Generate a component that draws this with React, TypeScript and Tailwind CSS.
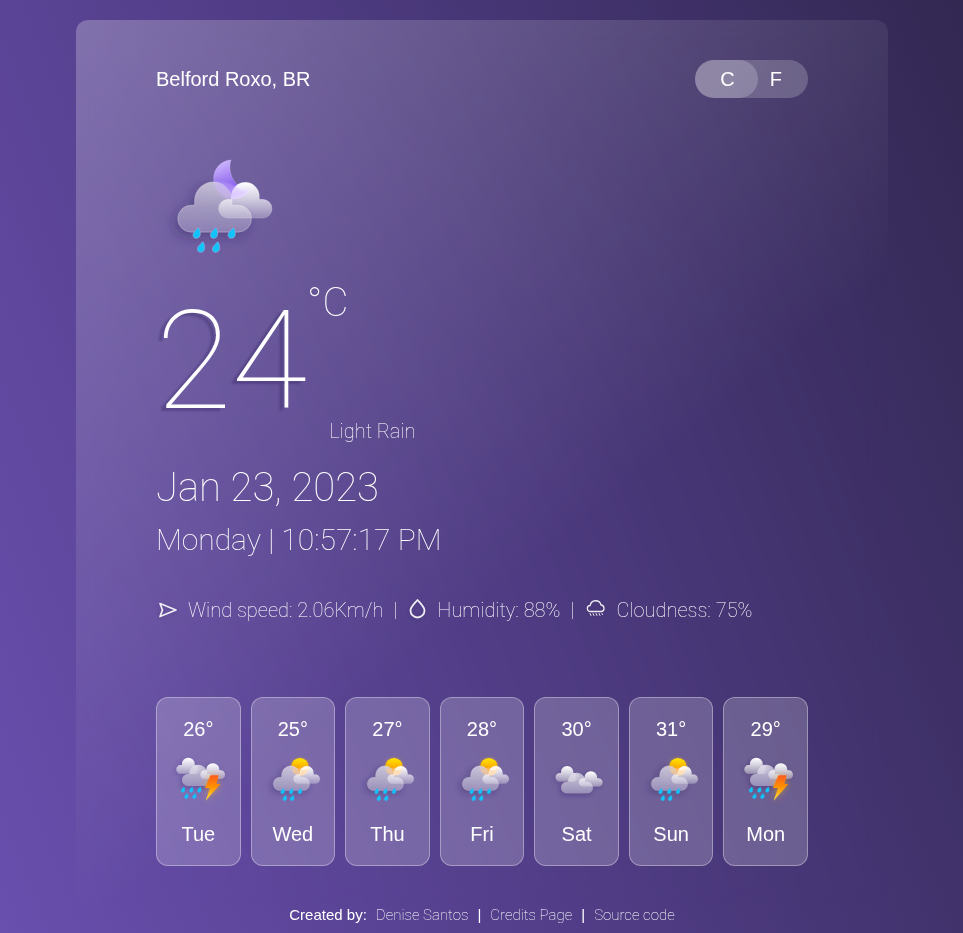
import { useState, type ReactNode } from "react";

type Kind = "storm" | "sunRain" | "cloudy";

const forecast: { temp: number; day: string; kind: Kind }[] = [
  { temp: 26, day: "Tue", kind: "storm" },
  { temp: 25, day: "Wed", kind: "sunRain" },
  { temp: 27, day: "Thu", kind: "sunRain" },
  { temp: 28, day: "Fri", kind: "sunRain" },
  { temp: 30, day: "Sat", kind: "cloudy" },
  { temp: 31, day: "Sun", kind: "sunRain" },
  { temp: 29, day: "Mon", kind: "storm" },
];

/* Gradients and filters shared by every weather drawing. */
function SharedDefs() {
  return (
    <svg width="0" height="0" className="absolute" aria-hidden="true">
      <defs>
        <linearGradient id="cloudBody" x1="0.2" y1="0" x2="0.1" y2="1">
          <stop offset="0" stopColor="#aaa0c4" stopOpacity="0.85" />
          <stop offset="0.5" stopColor="#8a7eb0" stopOpacity="0.85" />
          <stop offset="1" stopColor="#8a7cb6" stopOpacity="0.7" />
        </linearGradient>
        <linearGradient id="cloudBodyDay" x1="0" y1="0" x2="0" y2="1">
          <stop offset="0" stopColor="#b9b1cd" stopOpacity="0.8" />
          <stop offset="0.6" stopColor="#a39abf" stopOpacity="0.8" />
          <stop offset="1" stopColor="#9a8fbd" stopOpacity="0.75" />
        </linearGradient>
        <linearGradient id="backCloud" x1="0" y1="0" x2="0" y2="1">
          <stop offset="0" stopColor="#fff" stopOpacity="0.36" />
          <stop offset="1" stopColor="#fff" stopOpacity="0.1" />
        </linearGradient>
        <linearGradient id="frontCloud" x1="0" y1="0" x2="0" y2="1">
          <stop offset="0" stopColor="#fff" />
          <stop offset="0.45" stopColor="#fff" stopOpacity="0.7" />
          <stop offset="1" stopColor="#fff" stopOpacity="0.28" />
        </linearGradient>
        <linearGradient id="moon" x1="0" y1="0" x2="0.4" y2="1">
          <stop offset="0" stopColor="#d8c4ff" />
          <stop offset="0.75" stopColor="#8d63ef" />
          <stop offset="1" stopColor="#b795ff" />
        </linearGradient>
        <linearGradient id="sun" x1="0" y1="0" x2="0" y2="1">
          <stop offset="0" stopColor="#ffe600" />
          <stop offset="0.6" stopColor="#ffa800" />
          <stop offset="1" stopColor="#ff9500" />
        </linearGradient>
        <linearGradient id="bolt" x1="0" y1="0" x2="0" y2="1">
          <stop offset="0" stopColor="#ff5a1f" />
          <stop offset="0.45" stopColor="#ff9100" />
          <stop offset="1" stopColor="#ffe23d" />
        </linearGradient>
        <filter id="shade" x="-30%" y="-30%" width="160%" height="170%">
          <feDropShadow dx="-12" dy="14" stdDeviation="18" floodColor="#2c1d5c" floodOpacity="0.5" />
        </filter>
        <filter id="shadeSmall" x="-30%" y="-30%" width="160%" height="170%">
          <feDropShadow dx="-4" dy="6" stdDeviation="8" floodColor="#2c1d5c" floodOpacity="0.4" />
        </filter>
        <filter id="glow" x="-60%" y="-60%" width="220%" height="220%">
          <feDropShadow dx="0" dy="0" stdDeviation="10" floodColor="#ffb300" floodOpacity="0.5" />
        </filter>
        <filter id="soft" x="-20%" y="-20%" width="140%" height="140%">
          <feGaussianBlur stdDeviation="3" />
        </filter>
      </defs>
    </svg>
  );
}

const BIG_CLOUD =
  "M124 276a40 40 0 0 1-1-80h11v-14a56 56 0 0 1 112 0v14h18a40 40 0 0 1 1 80z";
const SMALL_CLOUD =
  "M234 234a28 28 0 0 1 0-56h10v-9a42 42 0 0 1 84 0v9h10a28 28 0 0 1 0 56z";
const MOON = "M243 60c-30 2-52 26-52 56 0 34 26 60 58 60 22 0 40-10 49-26-44-2-68-54-55-90z";
const PUFF = "M116 288a18 18 0 0 1 0-36h4v-6a27 27 0 0 1 53 0v6h6a18 18 0 0 1 0 36z";

const DROPS: [number, number][] = [
  [140, 279],
  [192, 279],
  [245, 279],
  [153, 321],
  [198, 321],
];

function Drop({ x, y, scale = 1, edge }: { x: number; y: number; scale?: number; edge?: boolean }) {
  return (
    <path
      d="M6-16C1-12-11-2-11 6-11 12-7 16-1 16c7 0 12-6 12-13C11-4 9-12 6-16z"
      transform={`translate(${x} ${y}) scale(${scale})`}
      fill="#10c4fb"
      stroke={edge ? "#9ba6dc" : "#1fbdf5"}
      strokeWidth={edge ? "2" : "3"}
    />
  );
}

function RainCloud({ night }: { night?: boolean }) {
  return (
    <>
      {night ? (
        <path d={MOON} fill="url(#moon)" stroke="#d9c8ff" strokeOpacity="0.5" strokeWidth="2" />
      ) : (
        <circle cx="245" cy="132" r="53" fill="url(#sun)" filter="url(#glow)" />
      )}
      <g filter="url(#shade)">
        <path d={BIG_CLOUD} fill={night ? "url(#cloudBody)" : "url(#cloudBodyDay)"} />
        <path d={BIG_CLOUD} fill="url(#backCloud)" stroke="#fff" strokeOpacity="0.22" strokeWidth="3" />
      </g>
      {!night && (
        <path d="M195 150a54 54 0 0 0 100 0l-50-14z" fill="#ffc98a" opacity="0.55" filter="url(#soft)" />
      )}
      <path d={SMALL_CLOUD} fill="url(#frontCloud)" stroke="#fff" strokeOpacity="0.3" strokeWidth="2" />
      {night ? (
        <path
          d="M194 130c4 24 24 46 54 46 24 0 42-12 50-28-14 4-30 2-44-10-20-12-44-14-60-8z"
          fill="#cdb2ff"
          opacity="0.45"
          filter="url(#soft)"
        />
      ) : (
        <path d="M250 150c14 6 30 4 46-8-4 20-20 36-46 40z" fill="#ffcf9a" opacity="0.5" filter="url(#soft)" />
      )}
      {DROPS.map(([x, y]) => (
        <Drop key={`${x}-${y}`} x={x} y={y} edge={night} />
      ))}
    </>
  );
}

/* The three overlapping puffs of a cloudy sky. */
function Puffs() {
  return (
    <g filter="url(#shadeSmall)">
      <path
        d="M94 251a13 13 0 0 1 0-26h4v-3a19 19 0 0 1 38 0v3h6a13 13 0 0 1 0 26z"
        fill="url(#frontCloud)"
      />
      <path d={PUFF} fill="url(#cloudBodyDay)" />
      <path d={PUFF} fill="url(#backCloud)" />
      <path d="M121 252a24 24 0 0 1 20-28 24 24 0 0 1-2 28z" fill="#fff" opacity="0.25" />
      <path
        d="M166 267a13 13 0 0 1 0-26h5v-2a19 19 0 0 1 39 0v2h4a13 13 0 0 1 0 26z"
        fill="url(#frontCloud)"
      />
    </g>
  );
}

const STORM_DROPS: [number, number][] = [
  [101, 299],
  [126, 299],
  [150, 299],
  [111, 318],
  [135, 318],
];

function ForecastIcon({ kind }: { kind: Kind }) {
  if (kind === "sunRain") {
    return (
      <svg viewBox="-9 -6 424 424" className="size-[70px]" aria-hidden="true">
        <RainCloud />
      </svg>
    );
  }
  if (kind === "cloudy") {
    return (
      <svg viewBox="39 135 217 217" className="size-[70px]" aria-hidden="true">
        <Puffs />
      </svg>
    );
  }
  return (
    <svg viewBox="41 162 210 210" className="size-[70px]" aria-hidden="true">
      <Puffs />
      {STORM_DROPS.map(([x, y]) => (
        <Drop key={`${x}-${y}`} x={x} y={y} scale={0.48} />
      ))}
      <path d="M183 256h25l-7 26h12l-44 50 13-38h-15z" fill="url(#bolt)" filter="url(#glow)" />
    </svg>
  );
}

function Stat({ icon, children }: { icon: ReactNode; children: ReactNode }) {
  return (
    <span className="flex items-center gap-[10px]">
      {icon}
      <span>{children}</span>
    </span>
  );
}

export default function App() {
  const [unit, setUnit] = useState<"C" | "F">("C");
  const show = (c: number) => (unit === "C" ? c : Math.round(c * 1.8 + 32));

  return (
    <div className="flex min-h-screen flex-col bg-[linear-gradient(69deg,#694fae_0%,#4e3b82_50%,#322852_100%)] pt-5 pr-[75px] pl-19 font-['Liberation_Sans',Arial,sans-serif] text-white">
      <SharedDefs />
      <main className="rounded-xl bg-[linear-gradient(141deg,rgba(255,255,255,0.25)_0%,rgba(255,255,255,0)_60%)] px-20 py-10 backdrop-blur-[10px]">
        <header className="flex h-[38px] items-center justify-between text-xl">
          <h1>Belford Roxo, BR</h1>
          <div className="flex h-full rounded-full bg-white/20" role="group" aria-label="Temperature unit">
            <button
              type="button"
              aria-pressed={unit === "C"}
              onClick={() => setUnit("C")}
              className="rounded-full bg-white/20 pr-[23px] pl-[25px]"
            >
              C
            </button>
            <button
              type="button"
              aria-pressed={unit === "F"}
              onClick={() => setUnit("F")}
              className="rounded-full pr-[26px] pl-3"
            >
              F
            </button>
          </div>
        </header>

        <svg viewBox="18 -6 420 420" className="mt-10 size-[140px]" aria-label="Light rain at night">
          <RainCloud night />
        </svg>

        <section className="font-['Roboto',sans-serif] font-thin">
          <div className="flex h-[171px] items-start pt-px">
            <span className="text-[138px] leading-[165px] [text-shadow:-5px_3px_2px_rgba(40,25,85,0.3)]">
              {show(24)}
            </span>
            <span className="text-[40px] leading-[48px]">°{unit}</span>
            <span className="mt-[137px] -ml-[19px] text-xl leading-[30px]">Light Rain</span>
          </div>
          <p className="mt-[15px] text-[40px] leading-[48px]">Jan 23, 2023</p>
          <p className="mt-[10px] text-[30px] leading-[36px]">Monday | 10:57:17 PM</p>
          <div className="mt-[37px] flex flex-wrap items-center gap-[10px] text-xl leading-[30px]">
            <Stat
              icon={
                <svg viewBox="0 0 22 22" className="size-[22px] opacity-90 drop-shadow-sm" fill="none" stroke="#fff" strokeLinejoin="round" aria-hidden="true">
                  <path d="M4 4.500 20 11 4 17.500 6.500 11z" strokeWidth="1.700" />
                </svg>
              }
            >
              Wind speed: 2.06Km/h
            </Stat>
            <span>|</span>
            <Stat
              icon={
                <svg viewBox="0 0 20 22" className="h-[22px] w-5 opacity-90 drop-shadow-sm" fill="none" stroke="#fff" strokeWidth="1.800" strokeLinejoin="round" aria-hidden="true">
                  <path d="M10.500 1C7 5 3.500 8 3.500 11.500a7 7 0 0 0 14 0c0-3.500-3.500-6.500-7-10.500z" />
                </svg>
              }
            >
              Humidity: 88%
            </Stat>
            <span>|</span>
            <Stat
              icon={
                <svg viewBox="0 0 22 22" className="size-[22px] opacity-90 drop-shadow-sm" fill="none" stroke="#fff" strokeLinecap="round" strokeLinejoin="round" aria-hidden="true">
                  <path strokeWidth="1.300" d="M6.500 12.500a3 3 0 0 1-.3-6A5.500 5.500 0 0 1 17 6a3.300 3.300 0 0 1 .5 6.500z" />
                  <path d="M6 14.500l1 2M9 14.500l1 2M12 14.500l1 2M15 14.500l1 2M18 14.500l.5 1" />
                </svg>
              }
            >
              Cloudness: 75%
            </Stat>
          </div>
        </section>

        <ul className="mt-[72px] grid grid-cols-7 gap-[10px] text-xl leading-[30px]">
          {forecast.map((f) => (
            <li
              key={f.day}
              className="flex flex-col items-center rounded-xl border border-white/35 bg-white/20 py-4"
            >
              <span>{show(f.temp)}°</span>
              <ForecastIcon kind={f.kind} />
              <span className="mt-[5px]">{f.day}</span>
            </li>
          ))}
        </ul>
      </main>

      <footer className="flex items-center justify-center gap-[9px] text-[15px] leading-[18px] will-change-transform">
        <span>Created by:</span>
        <a href="#author" className="font-['Roboto',sans-serif] font-thin">
          Denise Santos
        </a>
        <span>|</span>
        <a href="#credits" className="font-['Roboto',sans-serif] font-thin">
          Credits Page
        </a>
        <span>|</span>
        <a href="#source" className="font-['Roboto',sans-serif] font-thin">
          Source code
        </a>
      </footer>
    </div>
  );
}
